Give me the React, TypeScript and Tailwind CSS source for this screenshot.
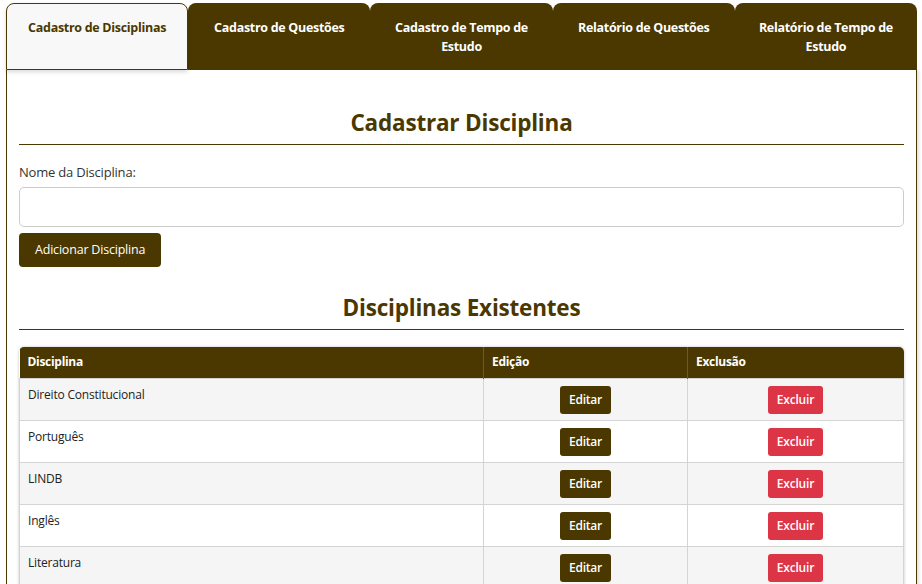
import React from "react";

const tabs = [
  "Cadastro de Disciplinas",
  "Cadastro de Questões",
  "Cadastro de Tempo de Estudo",
  "Relatório de Questões",
  "Relatório de Tempo de Estudo",
];

const rows = ["Direito Constitucional", "Português", "LINDB", "Inglês", "Literatura"];

export default function App() {
  return (
    <div
      className="w-[922px] h-[584px] overflow-hidden bg-white"
      style={{ fontFamily: '"Segoe UI", "Open Sans", "Noto Sans", sans-serif' }}
    >
      <div className="pl-[6px] pr-[5px] pt-[3px]">
        <div className="grid h-[67px] grid-cols-5">
          {tabs.map((t, i) =>
            i === 0 ? (
              <div
                key={t}
                className="relative z-10 rounded-t-[8px] border border-[#4a3800] bg-[#f8f8f8] px-[18px] pt-[14px] text-center text-[12.5px] font-bold leading-[19px] text-[#4a3800] tracking-[-0.3px] shadow-[0_2px_4px_rgba(0,0,0,0.15)]"
              >
                {t}
              </div>
            ) : (
              <div
                key={t}
                className="rounded-t-[8px] bg-[#4a3800] px-[18px] pt-[15px] text-center text-[12.5px] font-bold leading-[19px] text-white tracking-[-0.3px]"
              >
                {t}
              </div>
            )
          )}
        </div>
        <div className="h-[520px] border-x border-[#4a3800] bg-white px-[12px] pt-[38px] shadow-[2px_0_3px_rgba(0,0,0,0.12)]">
          <h2 className="text-center text-[22.5px] font-bold leading-[30px] text-[#4a3800] tracking-[-0.2px]">
            Cadastrar Disciplina
          </h2>
          <div className="mt-[6px] h-px bg-[#4a3800]" />
          <div className="mt-[19px] text-[13px] leading-[17px] text-[#333] tracking-[-0.2px]">
            Nome da Disciplina:
          </div>
          <div className="mt-[6px] h-[40px] rounded-[5px] border border-[#ccc] bg-white" />
          <button className="mt-[6px] block h-[34px] rounded-[4px] bg-[#4a3800] px-[16px] text-[12.5px] text-white tracking-[-0.2px]">
            Adicionar Disciplina
          </button>
          <h2 className="mt-[26px] text-center text-[22.5px] font-bold leading-[30px] text-[#4a3800] tracking-[-0.2px]">
            Disciplinas Existentes
          </h2>
          <div className="mt-[6px] h-px bg-[#4a3800]" />
          <div className="mt-[17px] overflow-hidden rounded-t-[5px] shadow-[0_0_3px_rgba(0,0,0,0.25)]">
            <table className="w-full border-collapse text-[12px]">
              <thead>
                <tr className="h-[31px] bg-[#4a3800] text-left text-white">
                  <th className="w-[464px] border-r border-[#6b5a2a] px-[8px] font-bold tracking-[-0.3px]">Disciplina</th>
                  <th className="w-[204px] border-r border-[#6b5a2a] px-[8px] font-bold tracking-[-0.3px]">Edição</th>
                  <th className="px-[8px] font-bold tracking-[-0.3px]">Exclusão</th>
                </tr>
              </thead>
              <tbody>
                {rows.map((r, i) => (
                  <tr key={r} className={i % 2 === 0 ? "bg-[#f5f5f5]" : "bg-white"}>
                    <td className="border border-[#d4d4d4] px-[8px] pt-[8px] align-top leading-[16px] text-[#222] tracking-[-0.2px]">
                      {r}
                    </td>
                    <td className="border border-[#d4d4d4] px-[8px] pb-[6px] pt-[7px] text-center align-top leading-none">
                      <button className="h-[28px] w-[51px] rounded-[3px] bg-[#4a3800] text-[12px] font-semibold text-white tracking-[-0.2px]">
                        Editar
                      </button>
                    </td>
                    <td className="border border-[#d4d4d4] px-[8px] pb-[6px] pt-[7px] text-center align-top leading-none">
                      <button className="h-[28px] w-[55px] rounded-[3px] bg-[#dc3545] text-[12px] font-semibold text-white tracking-[-0.2px]">
                        Excluir
                      </button>
                    </td>
                  </tr>
                ))}
              </tbody>
            </table>
          </div>
        </div>
      </div>
    </div>
  );
}
